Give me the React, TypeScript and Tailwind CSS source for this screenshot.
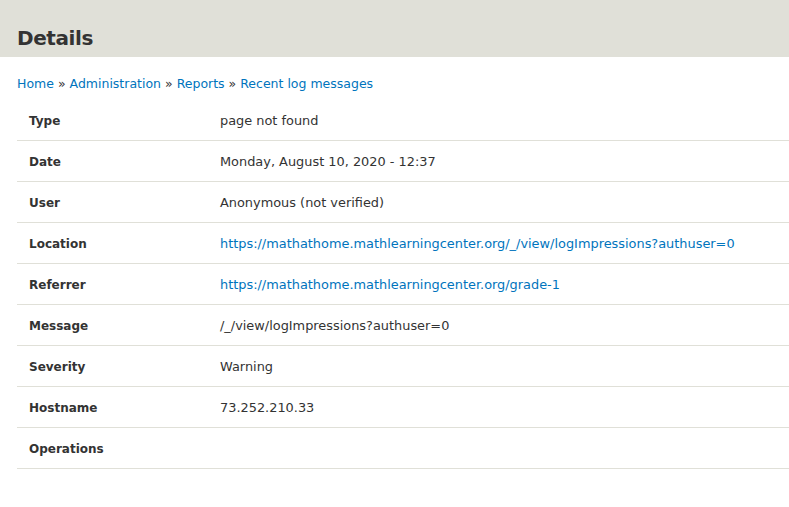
import React from 'react';

const rows: { label: string; value: string; link?: boolean }[] = [
  { label: 'Type', value: 'page not found' },
  { label: 'Date', value: 'Monday, August 10, 2020 - 12:37' },
  { label: 'User', value: 'Anonymous (not verified)' },
  { label: 'Location', value: 'https://mathathome.mathlearningcenter.org/_/view/logImpressions?authuser=0', link: true },
  { label: 'Referrer', value: 'https://mathathome.mathlearningcenter.org/grade-1', link: true },
  { label: 'Message', value: '/_/view/logImpressions?authuser=0' },
  { label: 'Severity', value: 'Warning' },
  { label: 'Hostname', value: '73.252.210.33' },
  { label: 'Operations', value: '' },
];

export default function App() {
  return (
    <div className="min-h-[507px] bg-white text-[#333] font-['DejaVu_Sans',sans-serif]">
      <div className="h-[57px] bg-[#e0e0d8] px-[17px] flex items-end pb-[9px]">
        <h1 className="text-[20px] font-bold leading-none tracking-[-0.4px] text-[#333]">Details</h1>
      </div>
      <div className="pl-[17px] pt-[19px] leading-[16px]">
        <nav className="text-[12.5px] text-[#0074bd]">
          <a>Home</a> <span className="text-[#333]">»</span> <a>Administration</a>{' '}
          <span className="text-[#333]">»</span> <a>Reports</a> <span className="text-[#333]">»</span>{' '}
          <a>Recent log messages</a>
        </nav>
        <div className="mt-[8px]">
          {rows.map((r) => (
            <div key={r.label} className="flex h-[41px] items-center border-b border-[#e0e0d8] pt-[1px]">
              <div className="w-[203px] shrink-0 pl-[12px] text-[12px] font-bold">{r.label}</div>
              <div className={`text-[12.9px] ${r.link ? 'text-[#0074bd]' : ''}`}>{r.value}</div>
            </div>
          ))}
        </div>
      </div>
    </div>
  );
}
